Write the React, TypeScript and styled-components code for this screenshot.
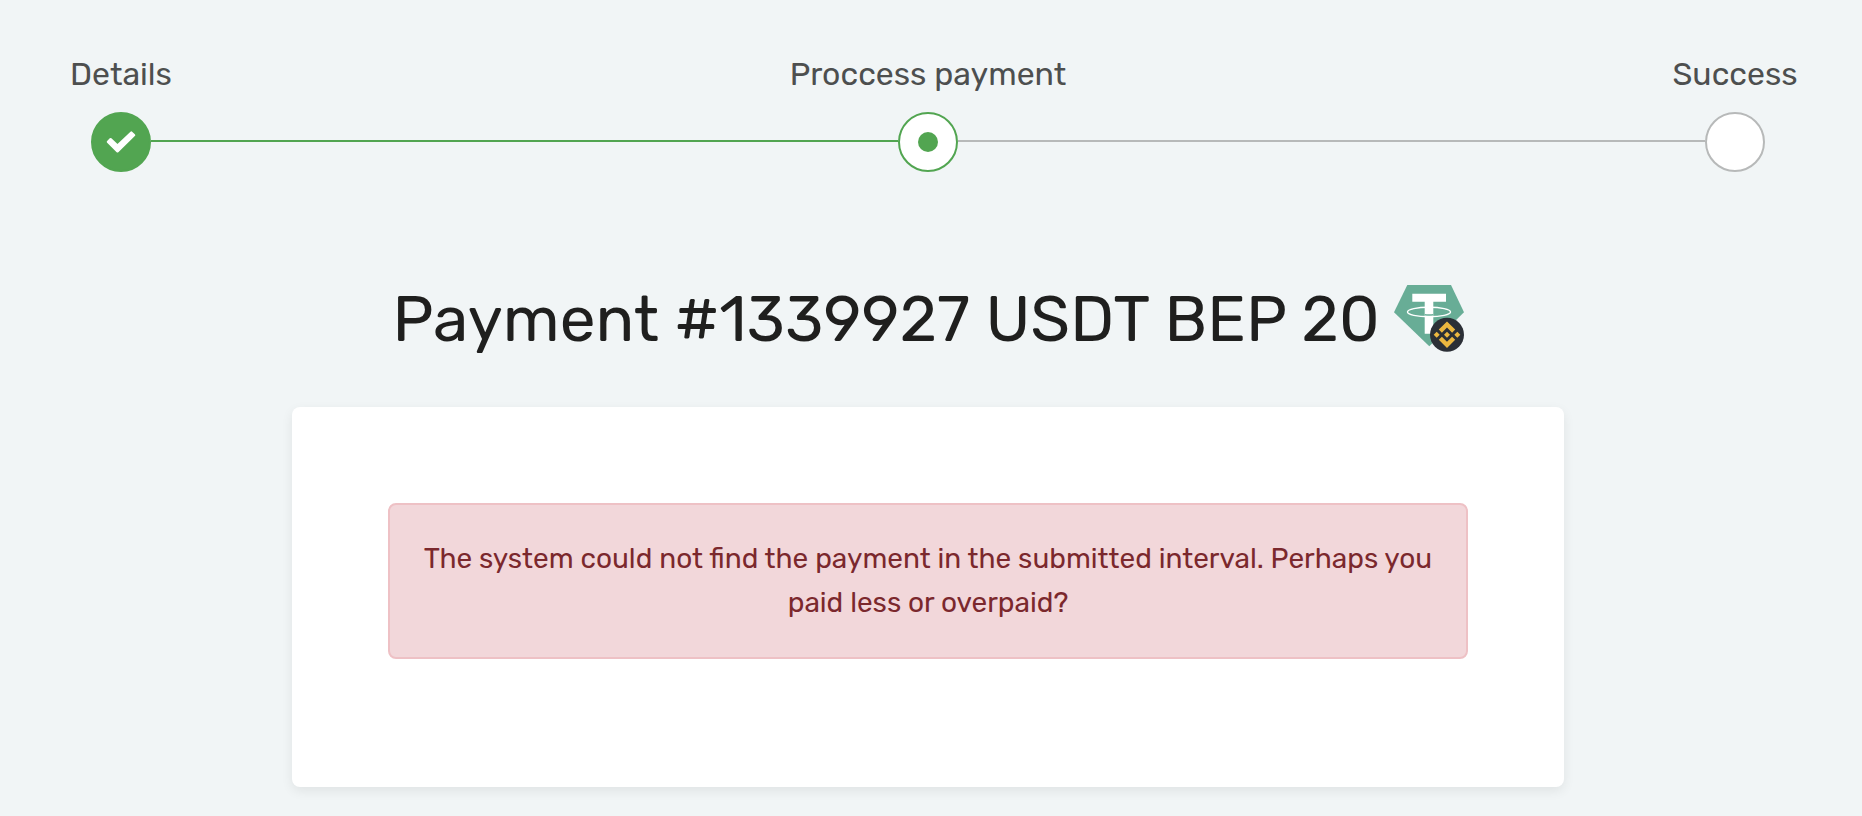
import React from "react";
import styled, { createGlobalStyle } from "styled-components";

const green = "#52a551";
const grey = "#b7b9b9";

const GlobalStyle = createGlobalStyle`
  *, *::before, *::after { box-sizing: border-box; }
  body {
    margin: 0;
    background: #f1f5f6;
    color: #1f1f1e;
    font-family: Rubik, Roboto, "Liberation Sans", sans-serif;
  }
`;

const Page = styled.main`
  display: flex;
  flex-direction: column;
  padding: 50px 6px 28px 0;
`;

const Stepper = styled.ol`
  display: flex;
  align-items: flex-end;
  list-style: none;
  margin: 0;
  padding: 0 91px;
`;

const Step = styled.li`
  display: flex;
  flex-direction: column;
  align-items: center;
  flex: 0 0 60px;
  width: 60px;
`;

const StepLabel = styled.span`
  margin-bottom: 14px;
  color: #4d4f4f;
  font-size: 32px;
  line-height: 48px;
  white-space: nowrap;
`;

type StepState = "done" | "current" | "pending";

const StepCircle = styled.span<{ $state: StepState }>`
  display: flex;
  align-items: center;
  justify-content: center;
  width: 60px;
  height: 60px;
  border: 2px solid ${(p) => (p.$state === "pending" ? grey : green)};
  border-radius: 50%;
  background: ${(p) => (p.$state === "done" ? green : "#fff")};
`;

const CurrentDot = styled.span`
  width: 20px;
  height: 20px;
  border-radius: 50%;
  background: ${green};
`;

const Connector = styled.li<{ $done?: boolean }>`
  flex: 1;
  height: 2px;
  margin-bottom: 30px;
  background: ${(p) => (p.$done ? green : grey)};
`;

const Title = styled.h1`
  display: flex;
  align-items: center;
  justify-content: center;
  gap: 14px;
  margin: 109px 0 50px;
  font-size: 64px;
  font-weight: 400;
  line-height: 76px;
`;

const Card = styled.section`
  align-self: center;
  width: 100%;
  max-width: 1272px;
  padding: 96px 96px 128px;
  border-radius: 8px;
  background: #fff;
  box-shadow: 0 4px 12px rgba(0, 0, 0, 0.075);
`;

const Alert = styled.p`
  margin: 0;
  padding: 32px;
  border: 2px solid #eec1c5;
  border-radius: 8px;
  background: #f2d7da;
  color: #7b282d;
  font-size: 28px;
  line-height: 44px;
  text-align: center;
`;

const CheckIcon = () => (
  <svg width="30" height="22" viewBox="0 0 30 22" aria-hidden="true">
    <path
      d="M2 10.800L4.600 8.200L11.500 14.700L25.300 1.500L28 4.200L11.500 20.300Z"
      fill="#fff"
      stroke="#fff"
      strokeWidth="2.400"
      strokeLinejoin="round"
    />
  </svg>
);

const TetherBscIcon = () => (
  <svg width="70" height="68" viewBox="0 0 70 68" role="img" aria-label="Tether on BNB Smart Chain">
    <path d="M13.300 0H57L70 27.300L35.300 61.300L0 27.300Z" fill="#68ad96" />
    <path d="M18.300 8.700H52V16.700H39.300V48.700H30.700V16.700H18.300Z" fill="#fff" />
    <path d="M30.700 29.700Q35 30.200 39.300 29.700" fill="none" stroke="#68ad96" strokeWidth="1.400" />
    <ellipse cx="35" cy="27" rx="21.500" ry="4.700" fill="none" stroke="#fff" strokeWidth="1.400" />
    <circle cx="53" cy="49.700" r="17" fill="#2b2f36" />
    <g fill="#ecb73f">
      <path d="M53 36.400L61.200 44.600L58.100 47.700L53 42.600L47.900 47.700L44.800 44.600Z" />
      <path d="M53 63L61.200 54.800L58.100 51.700L53 56.800L47.900 51.700L44.800 54.800Z" />
      <path d="M53 46.700L56 49.700L53 52.700L50 49.700Z" />
      <path d="M42.700 46.700L45.700 49.700L42.700 52.700L39.700 49.700Z" />
      <path d="M63.300 46.700L66.300 49.700L63.300 52.700L60.300 49.700Z" />
    </g>
  </svg>
);

export default function App() {
  return (
    <>
      <GlobalStyle />
      <Page>
        <Stepper>
          <Step>
            <StepLabel>Details</StepLabel>
            <StepCircle $state="done">
              <CheckIcon />
            </StepCircle>
          </Step>
          <Connector $done role="presentation" />
          <Step aria-current="step">
            <StepLabel>Proccess payment</StepLabel>
            <StepCircle $state="current">
              <CurrentDot />
            </StepCircle>
          </Step>
          <Connector role="presentation" />
          <Step>
            <StepLabel>Success</StepLabel>
            <StepCircle $state="pending" />
          </Step>
        </Stepper>
        <Title>
          <span>Payment #1339927 USDT BEP 20</span>
          <TetherBscIcon />
        </Title>
        <Card>
          <Alert role="alert">
            The system could not find the payment in the submitted interval. Perhaps you paid less or overpaid?
          </Alert>
        </Card>
      </Page>
    </>
  );
}
